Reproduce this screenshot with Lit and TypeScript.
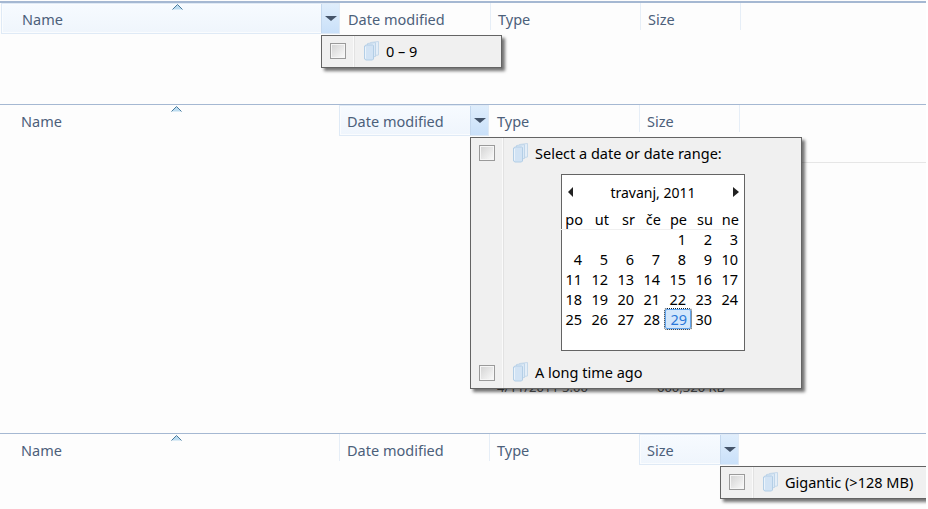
import { LitElement, html, css } from "lit";
import { customElement, property } from "lit/decorators.js";

const stackIcon = html`<svg class="stack" width="17" height="20" viewBox="0 0 17 20">
  <path d="M7.5 1.5 L15.5 .5 V14 L7.5 15Z" fill="#e4eef8" stroke="#c6d9ea"/>
  <path d="M4.5 2.5 L12.5 1.5 V15.5 L4.5 16.5Z" fill="#dce9f6" stroke="#bfd5e9"/>
  <path d="M1.5 5 L3 4 H9.5 L10.5 4.5 V18 L9.5 19 H3 L1.5 18Z" fill="#d2e3f4" stroke="#b3cee6"/>
  <path d="M2.5 6 V17.5" stroke="#eaf3fb" fill="none"/>
</svg>`;

@customElement("hdr-row")
class HdrRow extends LitElement {
  @property({ type: Number }) active = -1;
  static styles = css`
    :host { display: flex; height: 30px; font: 14.5px "Noto Sans", "Open Sans", sans-serif; color: #4c607a; }
    .col { position: relative; display: flex; box-sizing: border-box; box-shadow: 1px 0 0 #e6eef7; height: 27px; }
    .col.active { height: 31px; background: linear-gradient(#f7fbff, #eff5fc); box-shadow: inset 0 0 0 1px #fff, inset 0 0 0 2px #fafcfe; outline: 1px solid #dfeaf6; outline-offset: -1px; }
    .label { flex: 1; padding: 6px 0 0 8px; line-height: 20px; }
    .col.name .label { padding-left: 21px; }
    .split { width: 19px; background: linear-gradient(#e0eefc, #c9e0f9); display: flex; justify-content: center; padding-top: 13px; box-sizing: border-box; border-left: 1px solid #c4d8ee; }
    .split i { width: 0; height: 0; border: 6px solid transparent; border-top: 5px solid #44546a; border-bottom: 0; }
    .sort { position: absolute; left: 171px; top: 1px; }
  `;
  render() {
    const cols = [["Name", 339], ["Date modified", 150], ["Type", 150], ["Size", 100]] as const;
    return cols.map(([t, w], i) => html`
      <div class="col ${i === 0 ? "name" : ""} ${i === this.active ? "active" : ""}" style="width:${w}px">
        <div class="label">${t}</div>
        ${i === this.active ? html`<div class="split"><i></i></div>` : ""}
        ${i === 0 ? html`<svg class="sort" width="11" height="6" viewBox="0 0 11 6"><path d="M5.5 .5 L10.5 5.5 H.5Z" fill="#bcdcf0"/><path d="M.5 5.5 L5.5 .5 L10.5 5.5" fill="none" stroke="#4a7a9c"/></svg>` : ""}
      </div>`);
  }
}

@customElement("app-root")
class AppRoot extends LitElement {
  static styles = css`
    :host { display: block; width: 926px; height: 509px; overflow: hidden; background: #fdfdfd; font: 14.5px "Noto Sans", "Open Sans", sans-serif; color: #000; }
    .sec { position: relative; border-top: 1px solid #a5b8d2; box-sizing: border-box; }
    .s1 { height: 103px; margin-top: 1px; border-top-width: 2px; padding-left: 1px; }
    .s2 { height: 329px; }
    .s3 { height: 76px; }
    .rule { position: absolute; left: 802px; right: 0; top: 57px; height: 1px; background: #e6e6e6; }
    .under { position: absolute; top: 275px; line-height: 14px; font-size: 13px; color: #5a5a5a; white-space: nowrap; }
    .pop { position: absolute; box-sizing: border-box; background: #f0f0f0; border: 1px solid #646464; box-shadow: 3px 3px 3px rgba(0,0,0,.55); display: grid; grid-template-columns: 32px 1fr; }
    .gut { border-right: 1px solid #fafafa; box-shadow: 1px 0 0 #e2e2e2; display: flex; flex-direction: column; justify-content: space-between; align-items: center; }
    .check { width: 16px; height: 16px; margin: 7px 0; box-sizing: border-box; border: 1px solid #9a9a9a; background: linear-gradient(135deg, #d2d2d2, #fbfbfb); box-shadow: inset 0 0 0 1px #f6f6f6; }
    .body { display: flex; flex-direction: column; justify-content: space-between; padding: 0 0 1px 9px; }
    .item { display: flex; align-items: center; gap: 6px; height: 30px; white-space: nowrap; }
    .stack { flex: none; }
    .cal { align-self: flex-start; margin: 1px 0 1px 49px; width: 184px; height: 177px; box-sizing: border-box; border: 1px solid #646464; background: #fff; padding: 0 6px 0 0; }
    .title { display: flex; justify-content: space-between; align-items: center; height: 34px; margin-right: -1px; padding: 0 0 0 6px; }
    .title span { flex: 1; text-align: center; font-size: 14px; }
    .tri { width: 0; height: 0; border: 5px solid transparent; }
    .tri.l { border-left: 0; border-right: 5px solid #222; }
    .tri.r { border-right: 0; border-left: 6px solid #222; }
    .grid { display: grid; grid-template-columns: 22px repeat(6, 26px); grid-auto-rows: 20px; line-height: 20px; text-align: right; justify-content: end; margin-top: 0; }
    .dow { height: 20px; border-bottom: 1px solid #f0f0f0; margin-right: -1px; }
    .d.sel { color: #2a78d8; background: #d3e7fb; outline: 1px dotted #123; outline-offset: 0; border: 1px solid #5fa3ec; box-sizing: border-box; border-radius: 2px; line-height: 18px; padding-right: 3px; margin-left: 5px; margin-right: -5px; }
  `;
  render() {
    const dows = ["po", "ut", "sr", "če", "pe", "su", "ne"];
    const days = [...Array(4).fill(""), ...Array.from({ length: 30 }, (_, i) => i + 1)];
    const pop = (left: number, top: number, w: number, h: number, body: unknown) =>
      html`<div class="pop" style="left:${left}px;top:${top}px;width:${w}px;height:${h}px">${body}</div>`;
    const simple = (t: string) => html`<div class="gut"><div class="check"></div></div><div class="body"><div class="item">${stackIcon}<span>${t}</span></div></div>`;
    return html`
      <div class="sec s1">
        <hdr-row active="0"></hdr-row>
        ${pop(321, 32, 181, 33, simple("0 – 9"))}
      </div>
      <div class="sec s2">
        <hdr-row active="1"></hdr-row>
        <div class="rule"></div>
        <div class="under" style="left:497px">4/11/2011 5:00</div>
        <div class="under" style="left:657px">600,320 KB</div>
        ${pop(470, 32, 332, 252, html`
          <div class="gut"><div class="check"></div><div class="check"></div></div>
          <div class="body">
            <div class="item">${stackIcon}<span>Select a date or date range:</span></div>
            <div class="cal">
              <div class="title"><i class="tri l"></i><span>travanj, 2011</span><i class="tri r"></i></div>
              <div class="grid">
                ${dows.map(d => html`<div class="dow">${d}</div>`)}
                ${days.map(d => html`<div class="d ${d === 29 ? "sel" : ""}">${d}</div>`)}
              </div>
            </div>
            <div class="item">${stackIcon}<span>A long time ago</span></div>
          </div>`)}
      </div>
      <div class="sec s3">
        <hdr-row active="3"></hdr-row>
        ${pop(720, 32, 210, 33, simple("Gigantic (>128 MB)"))}
      </div>`;
  }
}
